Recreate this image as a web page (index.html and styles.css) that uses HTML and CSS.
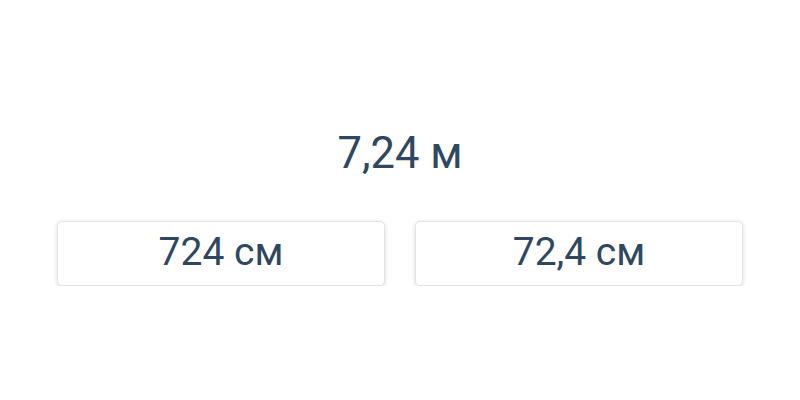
FILE: index.html
```html
<!DOCTYPE html>
<html lang="ru">
<head>
<meta charset="UTF-8" />
<meta name="viewport" content="width=device-width, initial-scale=1" />
<title>Перевод единиц</title>
<link rel="stylesheet" href="styles.css">
</head>
<body>
  <div class="quiz">
    <div class="question">7,24 м</div>
    <div class="answers">
      <button class="answer">724 см</button>
      <button class="answer">72,4 см</button>
    </div>
  </div>
</body>
</html>
```

FILE: styles.css
```css
* {
  box-sizing: border-box;
}

body {
  margin: 0;
  background: #fff;
  font-family: Roboto, 'Noto Sans', sans-serif;
  color: #2f4760;
}

.quiz {
  padding: 128px 57px 0;
}

.question {
  font-size: 43.5px;
  line-height: 1.2;
  text-align: center;
  margin-bottom: 41px;
}

.answers {
  display: grid;
  grid-template-columns: 1fr 1fr;
  gap: 30px;
}

.answer {
  height: 65px;
  background: #fff;
  border: 1px solid #e3e3e3;
  border-radius: 5px;
  box-shadow: 0 1px 4px rgba(0, 0, 0, 0.14);
  font-family: inherit;
  font-size: 39px;
  color: #2f4760;
  display: flex;
  align-items: center;
  justify-content: center;
  padding: 0 0 3px;
  cursor: pointer;
}
```
